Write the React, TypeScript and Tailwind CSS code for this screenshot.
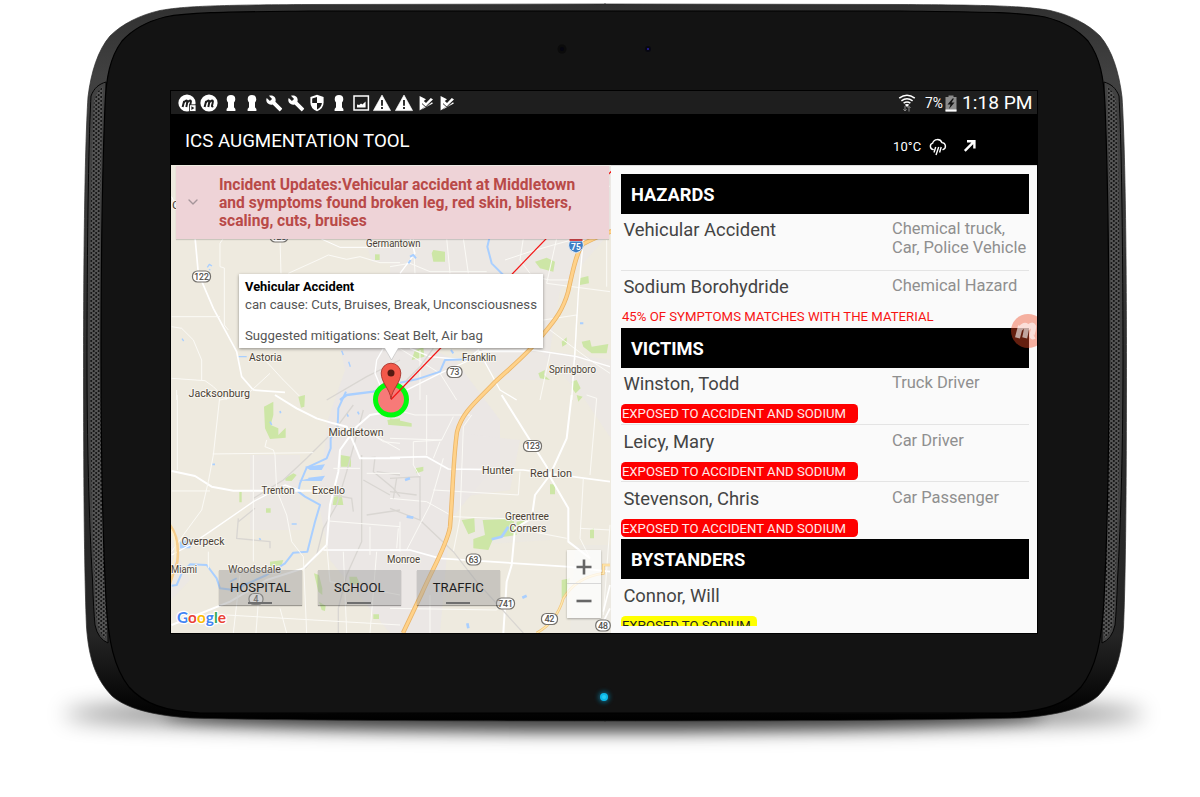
import React from "react";
import { ChevronDown } from "lucide-react";

function BodyHalf() {
  return (
    <>
      <path
        d="M606 4L310 4.5C220 5 185 6 160 10.500C140 15 122 24 110 36C98 50 91 72 88 97C84.500 150 83.500 280 83.500 360C83.500 450 84 570 86.500 627C89 662 97 680 112 696C126 708 150 715 190 718C280 720.500 440 721 606 721"
        fill="url(#rim)"
        stroke="#2a2a2a"
        strokeWidth="0.7"
      />
      <path
        d="M106 82C99 84 94 88 91 96C88 150 87 280 87 360C87 440 89 520 92.500 580Q93.500 610 95 625Q98 639 108 643Z"
        fill="#424242"
        stroke="#050505"
        strokeWidth="1"
      />
      <path
        d="M103 86L97.500 92L94 100C91 150 90 280 90 360C90 440 92 520 94.500 580Q95.500 610 97 622Q99 632 105 639L107 630L103 480L99 360L100 200Z"
        fill="url(#mesh)"
      />
      <path
        d="M606 11L310 11C230 12 190 12 165 17C145 22 132 30 122 41C110 57 106 78 105 105C102 180 101 280 101 360C101 450 103 540 106 600C108 640 114 668 129 687C144 704 165 711 200 713C300 714 450 713 606 713"
        fill="#131313"
        stroke="#000"
        strokeWidth="1.2"
      />
    </>
  );
}

function Device() {
  return (
    <svg className="absolute inset-0 h-full w-full" viewBox="0 0 1200 797">
      <defs>
        <linearGradient id="rim" x1="0" y1="0" x2="0" y2="1">
          <stop offset="0" stopColor="#303030" />
          <stop offset="0.1" stopColor="#414141" />
          <stop offset="0.5" stopColor="#2f2f2f" />
          <stop offset="0.88" stopColor="#252525" />
          <stop offset="0.97" stopColor="#070707" />
          <stop offset="1" stopColor="#000" />
        </linearGradient>
        <pattern id="mesh" width="5" height="4" patternUnits="userSpaceOnUse">
          <rect width="5" height="4" fill="#565656" />
          <circle cx="1.2" cy="1" r="1.05" fill="#141414" />
          <circle cx="3.7" cy="3" r="1.05" fill="#141414" />
        </pattern>
        <filter id="soft" x="-20%" y="-200%" width="140%" height="500%">
          <feGaussianBlur stdDeviation="11" />
        </filter>
        <filter id="under" x="-20%" y="-200%" width="140%" height="500%">
          <feGaussianBlur stdDeviation="7" />
        </filter>
        <filter id="glow" x="-200%" y="-200%" width="500%" height="500%">
          <feGaussianBlur stdDeviation="2" />
        </filter>
      </defs>
      <ellipse cx="604" cy="714" rx="540" ry="15" fill="#000" opacity="0.55" filter="url(#soft)" />
      <ellipse cx="604" cy="716" rx="440" ry="15" fill="#000" opacity="0.5" filter="url(#under)" />
      <BodyHalf />
      <g transform="translate(1210 0) scale(-1 1)">
        <BodyHalf />
      </g>
      <rect x="170" y="90" width="868" height="544" fill="#000" />
      <circle cx="562" cy="49" r="4.5" fill="#0b0b0b" />
      <circle cx="562" cy="49" r="2" fill="#050510" />
      <circle cx="648" cy="49" r="3" fill="#080812" />
      <circle cx="648" cy="49" r="1" fill="#2a1fb0" />
      <circle cx="604" cy="697" r="6" fill="#0a6a88" opacity="0.7" filter="url(#glow)" />
      <circle cx="604" cy="697" r="4" fill="#0cb8e8" />
      <circle cx="604" cy="697" r="2" fill="#25cdf5" />
    </svg>
  );
}

const M_STROKE = "M4.6 13L6.2 6.9M5.8 8.6Q8.6 5.3 9.3 7.2Q9.2 9 8.3 13M9.2 8.6Q12 5.3 12.9 7.2Q12.8 9 12 11.6Q11.8 13 13.2 12.2";

function Glyph({ kind }: { kind: string }) {
  return (
    <svg width="18" height="18" viewBox="0 0 18 18" fill="#fff">
      {(kind === "mplay" || kind === "m") && (
        <>
          <circle cx="9" cy="9" r="8.6" />
          <path d={M_STROKE} fill="none" stroke="#1c1c1c" strokeWidth="2" />
        </>
      )}
      {kind === "mplay" && (
        <>
          <rect x="11.4" y="10.8" width="6.6" height="6.6" stroke="#1c1c1c" strokeWidth="0.8" />
          <path d="M13.4 12.3V16L16.4 14.1Z" fill="#1c1c1c" />
        </>
      )}
      {kind === "key" && (
        <path d="M9 1A4.3 4.3 0 0 1 13.3 5.2Q13.3 7.2 12 8.4V13.2L13.4 15V17H4.6V15L6 13.2V8.4Q4.7 7.2 4.7 5.2A4.3 4.3 0 0 1 9 1Z" />
      )}
      {kind === "wrench" && (
        <g transform="translate(0.6 0.6) scale(0.72)">
          <path d="M22.7 19l-9.1-9.1c.9-2.3.4-5-1.5-6.9-2-2-5-2.4-7.4-1.3L9 6 6 9 1.600 4.700C.4 7.100.9 10.100 2.900 12.100c1.900 1.900 4.600 2.400 6.900 1.500l9.100 9.100c.4.400 1 .4 1.400 0l2.300-2.300c.5-.4.5-1.100.1-1.400z" />
        </g>
      )}
      {kind === "shield" && (
        <>
          <path d="M9 0.800L15.600 3V8.500Q15.600 14.500 9 17.300Q2.400 14.500 2.400 8.500V3Z" />
          <path d="M9 3V9H4.200V4.400ZM9 9H13.900Q13.500 13.300 9 15.400Z" fill="#1c1c1c" />
        </>
      )}
      {kind === "image" && (
        <>
          <rect x="2" y="2" width="14.400" height="14" fill="none" stroke="#fff" strokeWidth="1.500" />
          <path d="M5 13.400V10.500L7.200 11L9 9.500L10.400 10.500L13.600 7.400V13.400Z" />
        </>
      )}
      {kind === "warn" && (
        <>
          <path d="M9 1L17.600 16.600H0.400Z" stroke="#fff" strokeWidth="0.600" strokeLinejoin="round" />
          <path d="M9 6V11.800M9 13V15" stroke="#1c1c1c" strokeWidth="1.800" />
        </>
      )}
      {kind === "check" && (
        <>
          <path d="M2.600 2L9 5.200L6.800 7L9 9L13.800 4L16 5.600L9 12L2.600 16.400Z" />
          <path d="M3.800 16L15.800 9.400L15 8L9 12Z" />
          <path d="M4.600 8L8.600 11.600L15 5.600" fill="none" stroke="#1c1c1c" strokeWidth="0.900" transform="translate(0.400 1.600)" />
        </>
      )}
    </svg>
  );
}

const GLYPHS = ["mplay", "m", "key", "key", "wrench", "wrench", "shield", "key", "image", "warn", "warn", "check", "check"];

function StatusBar() {
  return (
    <div className="flex h-[23px] shrink-0 items-center justify-between bg-[#1e1e1e] pl-[7.200px] pr-[4px] pt-[1.500px]">
      <div className="flex items-center">
        {GLYPHS.map((g, i) => (
          <span key={i} className="flex w-[21.700px] items-center">
            <Glyph kind={g} />
          </span>
        ))}
      </div>
      <div className="flex items-center whitespace-nowrap text-white">
        <svg width="18" height="18" viewBox="0 0 18 18" fill="none" stroke="#fff" strokeWidth="1.500">
          <path d="M1.200 4.200Q9 -1.600 16.800 4.200M3.400 6.800Q9 2.600 14.600 6.800M5.600 9.200Q9 6.600 12.400 9.200" />
          <path d="M9 13L6.800 10.800Q9 9.400 11.200 10.800Z" fill="#fff" stroke="none" />
          <path d="M7 12V17M5.400 15.300L7 17L8.500 15.300M11 17.500V12.500M9.600 14L11 12.400L12.600 14" stroke="#8a8a8a" strokeWidth="1" />
        </svg>
        <span className="ml-[9px] w-[20px] text-[13.800px]/[20px]">7%</span>
        <svg className="mr-[5px]" width="12" height="17" viewBox="0 0 12 17">
          <path d="M0.500 2H3.500V0.500H8.500V2H11.500V16.500H0.500Z" fill="#8c8c8c" />
          <path d="M0.500 14.500H11.500V16.500H0.500Z" fill="#fff" />
          <path d="M7.500 3.500L2.500 9.500H5.500L4 14L9.500 7.500H6.500L9 3.500Z" fill="#151515" />
        </svg>
        <span className="w-[71px] text-[19.200px]/[22px]">1:18 PM</span>
      </div>
    </div>
  );
}

function AppBar() {
  return (
    <div className="flex h-[51px] shrink-0 bg-black pl-[14px] text-white">
      <h1 className="w-[708px] pt-[15px] text-[18.700px]/[24px]">ICS AUGMENTATION TOOL</h1>
      <span className="w-[36px] pt-[25px] text-[13px]/[16px] tracking-[0.100px]">10°C</span>
      <svg className="mt-[24px]" width="18" height="18" viewBox="0 0 18 18" fill="none" stroke="#fff" strokeWidth="1.400">
        <path d="M4.800 11.600H4.300A3.300 3.300 0 0 1 3.600 5.200A5 5 0 0 1 13 4.600A3.600 3.600 0 0 1 14 11.600H13.400" />
        <path d="M6.700 9L5 14.500M9.700 9L7 17M12.200 9L10.600 14.500" />
      </svg>
      <svg className="ml-[16px] mt-[25px]" width="14" height="14" viewBox="0 0 14 14" fill="none" stroke="#fff" strokeWidth="2.400">
        <path d="M1.800 11.800L11 2.600M4 2.200H11.400V9.600" />
      </svg>
    </div>
  );
}

function Road({ d, w = 4 }: { d: string; w?: number }) {
  return <path d={d} fill="none" stroke="#fff" strokeWidth={w} strokeLinejoin="round" />;
}
function Lane({ d }: { d: string }) {
  return <path d={d} fill="none" stroke="#fbfaf6" strokeWidth="3" strokeLinejoin="round" />;
}
function Rail({ d }: { d: string }) {
  return <path d={d} fill="none" stroke="#d9d6d2" strokeWidth="4" />;
}
function River({ d, w = 7 }: { d: string; w?: number }) {
  return <path d={d} fill="none" stroke="#a9cfff" strokeWidth={w} strokeLinejoin="round" />;
}
function Park({ d }: { d: string }) {
  return <path d={d} fill="#cde6a6" />;
}

function Highway({ d, w = 3.600 }: { d: string; w?: number }) {
  return (
    <>
      <path d={d} fill="none" stroke="#eab467" strokeWidth={w} />
      <path d={d} fill="none" stroke="#ffd28a" strokeWidth={w - 1.600} />
    </>
  );
}

function Label({ x, y, w, children }: { x: number; y: number; w: number; children: string }) {
  return (
    <text
      x={x}
      y={y}
      textLength={w}
      lengthAdjust="spacingAndGlyphs"
      fontSize="11.500"
      fill="#4a3f35"
      stroke="#f8f6f0"
      strokeWidth="2"
      strokeLinejoin="round"
      paintOrder="stroke"
    >
      {children}
    </text>
  );
}

function Shield({ x, y, w, children }: { x: number; y: number; w: number; children: string }) {
  return (
    <g>
      <rect x={x - w / 2} y={y - 5.500} width={w} height="11" rx="5" fill="#fff" stroke="#74716c" strokeWidth="1.200" />
      <text x={x} y={y + 3.200} fontSize="8.600" textAnchor="middle" fill="#4d4a46" stroke="#4d4a46" strokeWidth="0.200">
        {children}
      </text>
    </g>
  );
}

function MapCanvas() {
  return (
    <svg className="absolute inset-0" width="440" height="468" viewBox="171 165 440 468">
      <rect x="171" y="165" width="441" height="468" fill="#eeeadf" />
      <g fill="#ebe7e5">
        <path d="M330 300L455 360L500 420L500 460L450 520L440 633H390L330 560L318 500L328 420L345 370Z" />
        <path d="M250 455H300V530H250ZM390 165H612V230L560 290L545 380L500 380L470 350L390 330Z" opacity="0.850" />
        <path d="M365 240H400V262H372ZM430 430L520 440L510 490L440 500ZM171 540L190 580L171 600ZM540 350L612 360V440L585 400Z" opacity="0.700" />
        <path d="M470 520L550 510L550 540L470 545ZM575 545H612V633H570Z" opacity="0.600" />
      </g>

      <g transform="translate(170 160) scale(0.33333)">
        <Park d="M615 283H629V300H615Z" />
        <River d="M112 322L118 313L126 318M117 328L121 331" w={4} />
        <River d="M205 590H230M515 572L520 585M536 605L541 620M36 536L41 543" w={4} />
        <Road d="M73 210L85 340L130 445L200 575L215 650L250 690L345 697" w={5} />
        <Lane d="M160 235L150 250V320L163 324V495L175 510" />
        <Lane d="M330 235L333 340M355 340L450 297L475 285L530 298L570 290L630 308H690" />
        <Road d="M400 235H450L510 262H690" w={3} />
        <Lane d="M5 470H150M5 500L35 505L70 540L95 600V660M5 655L105 662L130 680L170 720M20 690V720" />
        <Lane d="M285 600L340 660L400 720M300 640L235 700L150 720" />
        <Rail d="M690 600L590 650L470 720" />
        <Road d="M640 565L620 600L615 640L640 700" w={4} />
        <River d="M690 675L610 695L530 705L510 720" />
        <Road d="M5 110L18 140" w={3} />
      </g>

      <g transform="translate(390 160) scale(0.33333)">
        <Park d="M125 280L130 270L165 275V305H130ZM35 350L60 345L55 370L30 365ZM435 305L470 293L495 305L490 335L450 325ZM568 355L595 348L597 370L570 375Z" />
        <Park d="M515 545L530 532V552L517 560ZM575 545L600 540L605 560L655 552L650 580L605 580L580 560ZM545 665L560 660L572 685L557 700L550 690ZM75 570L100 562L103 590L65 600Z" />
        <Park d="M445 640L465 630L462 645L480 660L450 655Z" />
        <Lane d="M70 235L75 340M170 235L180 340M220 235L235 340M0 320L60 310L120 335H290" />
        <Lane d="M400 235L390 300L420 340M345 300L420 275L490 255L545 240M380 170L400 235M500 235L470 370L660 395" />
        <Lane d="M590 30L660 80M650 240V380M400 345L480 360H545M460 480L560 465L555 600M480 580L450 720M480 510L600 600L660 640" />
        <Road d="M60 565L120 590L230 600L280 572L430 570L560 590L660 620" />
        <Road d="M580 240L565 400L558 520L545 720M30 340L75 280L60 235" />
        <Road d="M230 600L265 570L330 690L380 720M265 575L420 575M30 700L150 640L240 600" />
        <Lane d="M20 560L150 640L200 720M90 570V720" />
        <River d="M298 235L292 260L305 310L340 345" w={6} />
        <River d="M60 290L70 285L78 295M62 300L55 310M183 570L190 580M570 490L580 490" w={6} />
        <Rail d="M130 565L90 620L50 660" />
        <River d="M30 668L80 658L150 635L165 600L240 598" w={6} />
      </g>

      <g transform="translate(170 395) scale(0.33333)">
        <Park d="M282 35L310 20V60L302 90L325 100V120L347 98V128L300 132L285 100ZM385 5L405 0L403 35L393 38Z" />
        <Park d="M345 250L370 235L380 240L365 258L347 257ZM288 340H302V353H288ZM208 290H215V322H208ZM512 180L543 185V215H513ZM652 75L690 70V90H655ZM492 305L515 300L520 330H488Z" />
        <Park d="M432 535L447 540L457 580V600L445 590ZM538 545H560L570 568H540ZM447 620L467 632L465 648L455 645ZM610 658H627V672H610ZM300 500L340 495L335 510L300 515Z" />
        <River d="M528 -10L505 40L503 95L482 130V160L470 190L410 218L390 265L385 290L405 305L450 330L435 380L412 470L370 473L345 505L290 540L190 585L150 580L140 550L110 510L60 508L35 535L20 570L5 572" w={6} />
        <path d="M405 215L465 208L455 225H420ZM385 257L440 246L430 258ZM415 248L465 242L455 258H415ZM30 440L75 430L60 460H30Z" fill="#a9cfff" />
        <River d="M530 55L535 65M563 50L567 58M330 48L332 55M300 80L305 90M127 208H135M365 387H380M268 430L272 435M180 560L200 550" w={5} />
        <Rail d="M550 30L490 110L410 190L340 255L250 310M580 45L560 120L530 230L500 330L460 400L440 480L405 520" />
        <Rail d="M575 180L575 440L530 540L505 640V714M575 190L615 187L610 230L670 280L690 305M620 230L690 240M580 255L660 300M490 300L545 310L550 350M590 360L690 345" />
        <Rail d="M205 370L200 430L300 440V460M205 380L255 340" />
        <Road d="M5 228L75 243L125 275L190 287H440L490 280" w={6} />
        <Lane d="M22 0V225M150 0L130 180L115 260L95 345L40 420L5 470M290 135L285 155L310 165L315 180L320 285L350 360L365 440M128 177L430 173M5 288H120M250 180L250 500" />
        <Road d="M315 0L380 40L440 70L490 85L530 95L560 165L570 190H690" w={6} />
        <Road d="M690 45L600 60L560 95L510 165L505 230L480 330L470 450L400 520L290 555L180 620L5 690" w={6} />
        <Road d="M5 480L60 450L120 410L250 320L345 270L400 290" />
        <Road d="M460 465H690" w={5} />
        <Lane d="M610 120L690 165M580 100L640 140L690 145M490 220H570M590 235H690M475 378L690 395M600 395V480M690 380V470M365 440L400 485L410 714M330 640L350 714M265 620L258 714M170 660L690 690M115 470V520" />
        <Lane d="M470 450L480 560L690 600M520 470L530 714M620 470L600 714M210 540L190 714" />
        <path d="M0 390Q30 430 22 500L0 565" fill="none" stroke="#f6ce8d" strokeWidth="8" />
        <path d="M0 400Q22 430 14 490L0 530" fill="none" stroke="#fff0c8" strokeWidth="4" />
      </g>

      <g transform="translate(390 395) scale(0.33333)">
        <Park d="M0 70L65 85L65 95L0 90ZM75 220L100 215V228L80 235ZM480 268H495V298H480ZM215 375L253 370L255 410L235 418ZM278 375L370 372L380 420L310 430L295 465L250 460V432L285 420ZM380 380L410 375L380 395ZM600 405L612 400V430H600ZM515 555L540 550L525 610H515ZM560 0L578 5L565 20Z" />
        <Lane d="M0 130L155 135L70 140V210L90 245M110 0V180M0 40L75 60H240M155 135L190 65M130 190L150 140M130 285L385 300L390 230M160 190L120 330L50 465M0 310L110 320L190 365L450 375M245 60L220 95L210 370L190 470" />
        <Road d="M0 188L110 185L175 222L400 225L660 260" w={5} />
        <Road d="M335 0L470 215L480 245L535 340V440L600 490M545 0L530 130L480 240L435 300L425 370L375 400L365 510L350 560L340 714" w={6} />
        <Road d="M0 465H60L150 490L530 515L660 530" w={5} />
        <Lane d="M590 0L620 10L600 240M580 250L570 430L600 490M570 400L660 405M375 400L530 430M0 640L320 645L330 620M120 600V714M25 400L20 460M660 390L640 660" />
        <Rail d="M0 250L90 245V375L0 340M0 290L80 300M20 250L10 310M95 380L190 470L260 560L400 714" />
        <River d="M305 433L335 425L355 395M397 608L410 602M232 685L235 700M45 255L60 250M50 365L70 368" w={8} />
        <path d="M660 510H640V535Q560 545 520 610Q500 680 440 714" fill="none" stroke="#f2c77d" strokeWidth="8" />
        <path d="M660 510H640V535Q560 545 520 610Q500 680 440 714" fill="none" stroke="#ffe7ae" strokeWidth="4" />
        <Road d="M660 570L640 650M630 700L660 640" w={5} />
      </g>

      <Highway
        w={4.400}
        d="M612 231Q594 238 583 244C576 252 572 275 568 292C563 310 555 320 545 332C530 352 510 368 495 382C477 401 462 412 457 432C453 460 453 490 450 527C447 545 432 570 422 593L403 633"
      />

      <Label x={366} y={246.500} w={54.500}>Germantown</Label>
      <Label x={249} y={360.500} w={33}>Astoria</Label>
      <Label x={188.500} y={396.500} w={61.500}>Jacksonburg</Label>
      <Label x={462} y={360.500} w={34}>Franklin</Label>
      <Label x={549} y={372.500} w={47}>Springboro</Label>
      <Label x={328.500} y={436} w={55}>Middletown</Label>
      <Label x={482} y={474} w={32}>Hunter</Label>
      <Label x={530} y={476.500} w={42}>Red Lion</Label>
      <Label x={261.500} y={494} w={33}>Trenton</Label>
      <Label x={312} y={494} w={33}>Excello</Label>
      <Label x={505} y={519.500} w={44}>Greentree</Label>
      <Label x={509.500} y={531.500} w={37}>Corners</Label>
      <Label x={181.500} y={545} w={43}>Overpeck</Label>
      <Label x={387} y={563} w={33}>Monroe</Label>
      <Label x={171} y={572.500} w={26}>Miami</Label>
      <Label x={228} y={573} w={53}>Woodsdale</Label>
      <Label x={172} y={209} w={8}>C</Label>

      <Shield x={201.500} y={276.500} w={18}>122</Shield>
      <Shield x={279} y={236.500} w={18}>123</Shield>
      <Shield x={454.500} y={372} w={15}>73</Shield>
      <Shield x={532.500} y={446} w={18}>123</Shield>
      <Shield x={473.500} y={559.500} w={14.500}>63</Shield>
      <Shield x={505.500} y={603.500} w={18}>741</Shield>
      <Shield x={549.500} y={619} w={16}>42</Shield>
      <Shield x={603} y={625.500} w={14.500}>48</Shield>
      <Shield x={256} y={599} w={14}>4</Shield>
      <path d="M569.500 241H582.500Q586 250 576 253Q566 250 569.500 241Z" fill="#3f7fc6" stroke="#fff" strokeWidth="0.800" />
      <path d="M569.500 237H582.500V241H569.500Z" fill="#d8474a" />
      <text x="576" y="249.700" fontSize="8.500" fontWeight="700" fill="#fff" textAnchor="middle">75</text>

      <circle cx="391" cy="399.500" r="15.500" fill="#f77a78" stroke="#00fb0c" strokeWidth="5" />
      <path d="M391 399.500L612 170.500" stroke="#f41414" strokeWidth="1.200" />
      <path d="M391 399C390 389 381.200 383 381.200 373A9.800 9.800 0 0 1 400.800 373C400.800 383 392 389 391 399Z" fill="#f2584a" stroke="#a8332b" strokeWidth="0.900" />
      <circle cx="391" cy="373" r="3.500" fill="#541a12" />

      <text x="177" y="623" fontSize="16" fontFamily="Lato, Roboto, sans-serif" textLength="49" lengthAdjust="spacingAndGlyphs" stroke="#fff" strokeWidth="2.600" paintOrder="stroke" strokeLinejoin="round" fontWeight="700">
        <tspan fill="#4285f4">G</tspan>
        <tspan fill="#ea4335">o</tspan>
        <tspan fill="#fbbc05">o</tspan>
        <tspan fill="#4285f4">g</tspan>
        <tspan fill="#34a853">l</tspan>
        <tspan fill="#ea4335">e</tspan>
      </text>
    </svg>
  );
}

function InfoWindow() {
  return (
    <div className="absolute left-[67.500px] top-[109px] h-[74px] w-[304.500px] bg-white pl-[6.500px] pt-[4px] shadow-[0_1px_3px_rgba(0,0,0,0.4)]">
      <p className="text-[12.900px]/[18px] font-bold text-black">Vehicular Accident</p>
      <p className="whitespace-nowrap text-[13.200px]/[18px] text-[#555]">can cause: Cuts, Bruises, Break, Unconsciousness</p>
      <p className="mt-[13px] whitespace-nowrap text-[13.200px]/[18px] text-[#555]">Suggested mitigations: Seat Belt, Air bag</p>
      <svg className="absolute left-[144px] top-[73px]" width="18" height="14" viewBox="0 0 18 14">
        <path d="M1 0L8.500 13L16 0Z" fill="#fff" stroke="#bbb" strokeWidth="0.600" />
        <path d="M0 0H18V1H0Z" fill="#fff" />
      </svg>
    </div>
  );
}

function MapPanel() {
  return (
    <section className="relative h-[468px] w-[440px] shrink-0 overflow-hidden">
      <MapCanvas />
      <div className="absolute left-[5px] top-[1px] flex h-[72.500px] w-[433px] bg-[#eed3d7] shadow-[0_1px_1px_rgba(0,0,0,0.15)]">
        <ChevronDown className="ml-[9px] mt-[28px] shrink-0 text-[#a5959a]" size={16} strokeWidth={2} />
        <p className="ml-[18px] whitespace-nowrap pt-[9.500px] text-[15.600px]/[18.300px] font-bold text-[#b94a48]">
          Incident Updates:Vehicular accident at Middletown
          <br />
          and symptoms found broken leg, red skin, blisters,
          <br />
          scaling, cuts, bruises
        </p>
      </div>
      <InfoWindow />
      <div className="absolute left-[47.500px] top-[405px] flex gap-[15.500px]">
        {["HOSPITAL", "SCHOOL", "TRAFFIC"].map((t) => (
          <button
            key={t}
            className="flex h-[35px] w-[83.500px] flex-col items-center bg-[#9b9b9b]/45 pt-[9px] text-[13.100px]/[18px] text-[#1c1c1c] shadow-[0_1px_1px_rgba(0,0,0,0.35)]"
          >
            {t}
            <span className="mt-[5px] h-[2px] w-[24px] shrink-0 bg-[#6f6f6f]" />
          </button>
        ))}
      </div>
      <div className="absolute left-[395.500px] top-[385px] flex h-[68px] w-[34px] flex-col bg-white/75 shadow-[0_1px_2px_rgba(0,0,0,0.3)]">
        <div className="flex h-[34px] items-center justify-center border-b border-[#d8d8d8]">
          <svg width="16" height="16" viewBox="0 0 16 16" stroke="#666" strokeWidth="2.600">
            <path d="M8 0.500V15.500M0.500 8H15.500" />
          </svg>
        </div>
        <div className="flex h-[34px] items-center justify-center">
          <svg width="16" height="16" viewBox="0 0 16 16" stroke="#666" strokeWidth="2.600">
            <path d="M0.500 8H15.500" />
          </svg>
        </div>
      </div>
    </section>
  );
}

function Header({ children }: { children: string }) {
  return (
    <h2 className="flex h-[40px] shrink-0 items-center bg-black pl-[9.500px] pt-[2px] text-[18.300px]/[22px] font-bold text-white">
      {children}
    </h2>
  );
}

type RowProps = { name: string; role?: React.ReactNode; divider?: boolean; tag?: string; note?: string; yellow?: boolean };

function Row({ name, role, divider, tag, note, yellow }: RowProps) {
  return (
    <div className={`h-[57.100px] shrink-0 ${divider ? "border-b border-[#e4e4e4]" : ""}`}>
      <div className="flex h-[36.300px]">
        <span className="w-[270.500px] shrink-0 pl-[2px] pt-[5.300px] text-[18.400px]/[22px] text-[#444]">{name}</span>
        <span className="whitespace-nowrap pt-[5.300px] text-[16.500px]/[19px] text-[#8f8f8f]">{role}</span>
      </div>
      {note && <p className="pl-[0.500px] pt-[0.500px] text-[13.200px]/[18px] text-[#f81414]">{note}</p>}
      {tag && (
        <p
          className={`h-[18.500px] rounded-[4.500px] pl-[0.500px] pt-[1px] text-[13.150px]/[18.500px] ${
            yellow ? "w-[135.500px] bg-[#ffff00] text-[#222]" : "w-[237px] bg-[#fe0000] text-[#ffe9e9]"
          }`}
        >
          {tag}
        </p>
      )}
    </div>
  );
}

function ListPanel() {
  const exposed = "EXPOSED TO ACCIDENT AND SODIUM";
  return (
    <section className="relative flex grow flex-col overflow-hidden border-t border-[#dcdcdc] bg-[#fafafa]">
      <div className="ml-[10.400px] mt-[8px] flex h-[451.500px] w-[408px] flex-col overflow-hidden">
        <Header>HAZARDS</Header>
        <Row
          name="Vehicular Accident"
          divider
          role={
            <>
              Chemical truck,
              <br />
              Car, Police Vehicle
            </>
          }
        />
        <Row name="Sodium Borohydride" role="Chemical Hazard" note="45% OF SYMPTOMS MATCHES WITH THE MATERIAL" />
        <Header>VICTIMS</Header>
        <Row name="Winston, Todd" role="Truck Driver" tag={exposed} divider />
        <Row name="Leicy, Mary" role="Car Driver" tag={exposed} divider />
        <Row name="Stevenson, Chris" role="Car Passenger" tag={exposed} />
        <Header>BYSTANDERS</Header>
        <Row name="Connor, Will" tag="EXPOSED TO SODIUM" yellow />
      </div>
      <svg className="absolute left-[399.500px] top-[148px]" width="34" height="34" viewBox="0 0 34 34">
        <circle cx="17" cy="17" r="17" fill="#ee4a24" opacity="0.420" />
        <g transform="translate(-2.500 -1.500) scale(1.950)" opacity="0.600">
          <path d={M_STROKE} fill="none" stroke="#fff" strokeWidth="2.600" />
        </g>
      </svg>
    </section>
  );
}

export default function App() {
  return (
    <main className="relative h-[797px] w-[1200px] overflow-hidden bg-white pl-[171px] pt-[91px] font-['Roboto',sans-serif]">
      <Device />
      <div className="relative flex h-[542px] w-[866px] flex-col overflow-hidden bg-black">
        <StatusBar />
        <AppBar />
        <div className="flex h-[468px]">
          <MapPanel />
          <ListPanel />
        </div>
      </div>
    </main>
  );
}
